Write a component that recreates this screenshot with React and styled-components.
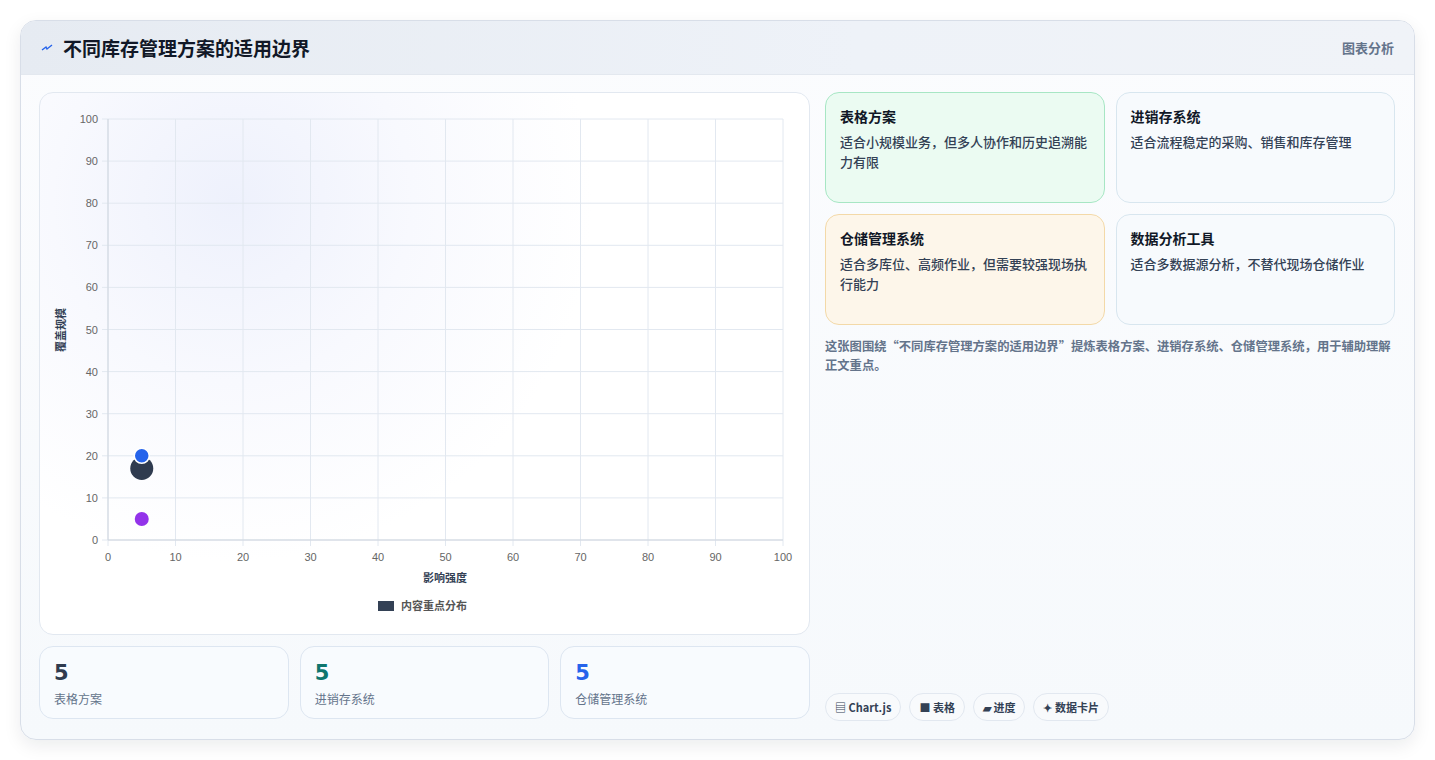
import React from 'react';
import styled, { createGlobalStyle } from 'styled-components';

const Global = createGlobalStyle`
  body { margin: 0; background: #fff; font-family: "Noto Sans CJK SC", "Noto Sans", sans-serif; }
`;

const Page = styled.div`
  padding: 20px;
  height: 760px;
  box-sizing: border-box;
`;

const Card = styled.div`
  width: 1395px;
  height: 720px;
  box-sizing: border-box;
  border: 1px solid #d8dee8;
  border-radius: 16px;
  overflow: hidden;
  background: linear-gradient(180deg, #fbfcfe, #f6f9fc);
  box-shadow: 0 6px 18px rgba(15, 23, 42, 0.08);
  display: flex;
  flex-direction: column;
`;

const Header = styled.div`
  height: 54px;
  flex-shrink: 0;
  box-sizing: border-box;
  display: flex;
  align-items: center;
  justify-content: space-between;
  padding: 0 20px;
  background: linear-gradient(90deg, #e6ebf2, #eef2f8 60%, #f0f3f8);
  border-bottom: 1px solid #e3e8ef;
`;

const Title = styled.h1`
  margin: 0;
  font-size: 19px;
  font-weight: 700;
  color: #111827;
  display: flex;
  align-items: center;
  gap: 10px;
`;

const HeaderTag = styled.span`
  font-size: 13px;
  color: #64748b;
  font-weight: 600;
`;

const Body = styled.div`
  flex: 1;
  display: grid;
  grid-template-columns: 771px 570px;
  gap: 15px;
  padding: 17px 18px 18px 18px;
`;

const LeftCol = styled.div`
  display: flex;
  flex-direction: column;
  gap: 11px;
`;

const ChartPanel = styled.div`
  height: 543px;
  box-sizing: border-box;
  border: 1px solid #e2e8f0;
  border-radius: 14px;
  background: radial-gradient(circle at 25% 20%, #eef1fc 0, #f8f9fe 25%, #ffffff 50%);
`;

const Stats = styled.div`
  display: grid;
  grid-template-columns: repeat(3, 1fr);
  gap: 11px;
`;

const Stat = styled.div`
  height: 73px;
  box-sizing: border-box;
  border: 1px solid #dde6f1;
  border-radius: 14px;
  background: #f8fbfe;
  padding: 12px 14px;
`;

const StatNum = styled.div`
  font-family: "DejaVu Sans", sans-serif;
  font-weight: 800;
  font-size: 21px;
  line-height: 28px;
  color: ${p => p.color};
`;

const StatLabel = styled.div`
  font-size: 12px;
  color: #64748b;
  margin-top: 3px;
`;

const RightCol = styled.div`
  display: flex;
  flex-direction: column;
`;

const Grid = styled.div`
  display: grid;
  grid-template-columns: 1fr 1fr;
  gap: 11px;
`;

const Info = styled.div`
  height: 111px;
  box-sizing: border-box;
  border: 1px solid ${p => p.border};
  background: ${p => p.bg};
  border-radius: 14px;
  padding: 13px 14px;
`;

const InfoTitle = styled.div`
  font-size: 14px;
  font-weight: 700;
  color: #111827;
  margin-bottom: 6px;
`;

const InfoText = styled.div`
  font-size: 13px;
  line-height: 20px;
  color: #334155;
  font-weight: 500;
`;

const Note = styled.p`
  margin: 12px 0 0;
  font-size: 12.3px;
  line-height: 19px;
  color: #64748b;
  font-weight: 600;
`;

const Chips = styled.div`
  margin-top: auto;
  display: flex;
  gap: 8px;
`;

const Chip = styled.span`
  height: 28px;
  box-sizing: border-box;
  border: 1px solid #e2e8f0;
  border-radius: 14px;
  background: #f8fafc;
  padding: 0 9px;
  display: flex;
  align-items: center;
  gap: 4px;
  font-size: 11px;
  font-weight: 700;
  color: #334155;
`;

const X0 = 68, X1 = 743, Y0 = 26, Y1 = 447;
const ticks = [0, 10, 20, 30, 40, 50, 60, 70, 80, 90, 100];
const px = v => X0 + (v / 100) * (X1 - X0);
const py = v => Y1 - (v / 100) * (Y1 - Y0);

const Chart = () => (
  <svg width="771" height="541" style={{ display: 'block' }} fontFamily="Liberation Sans, Noto Sans CJK SC, sans-serif">
    {ticks.map(t => (
      <g key={t}>
        <line x1={px(t)} x2={px(t)} y1={Y0} y2={Y1 + 6} stroke="#e2e8f0" />
        <line x1={X0 - 6} x2={X1} y1={py(t)} y2={py(t)} stroke="#e2e8f0" />
        <text x={X0 - 10} y={py(t) + 4} fontSize="11" fill="#666" textAnchor="end">{t}</text>
        <text x={px(t)} y={Y1 + 21} fontSize="11" fill="#666" textAnchor="middle">{t}</text>
      </g>
    ))}
    <line x1={X0} x2={X1} y1={Y1} y2={Y1} stroke="#cfd6df" />
    <line x1={X0} x2={X0} y1={Y0} y2={Y1} stroke="#cfd6df" />
    <text x={405} y={489} fontSize="11" fontWeight="700" fill="#334155" textAnchor="middle">影响强度</text>
    <text x={0} y={0} fontSize="11" fontWeight="700" fill="#334155" textAnchor="middle" transform="translate(25 237) rotate(-90)">覆盖规模</text>
    <circle cx={px(5)} cy={py(17)} r="11.5" fill="#2f3b4f" />
    <circle cx={px(5)} cy={py(20)} r="7.5" fill="#2563eb" stroke="#fff" strokeWidth="1.5" />
    <circle cx={px(5)} cy={py(5)} r="7" fill="#9333ea" />
    <rect x={338} y={508} width={16} height={10} fill="#334155" />
    <text x={361} y={517} fontSize="11" fontWeight="600" fill="#555">内容重点分布</text>
  </svg>
);

const Bolt = () => (
  <svg width="12" height="12" viewBox="0 0 12 12">
    <path d="M1 8 L5 5 L6 7 L11 3" stroke="#2563eb" strokeWidth="1.4" fill="none" />
  </svg>
);

export default function App() {
  return (
    <Page>
      <Global />
      <Card>
        <Header>
          <Title><Bolt />不同库存管理方案的适用边界</Title>
          <HeaderTag>图表分析</HeaderTag>
        </Header>
        <Body>
          <LeftCol>
            <ChartPanel><Chart /></ChartPanel>
            <Stats>
              <Stat><StatNum color="#2f3b4f">5</StatNum><StatLabel>表格方案</StatLabel></Stat>
              <Stat><StatNum color="#0f766e">5</StatNum><StatLabel>进销存系统</StatLabel></Stat>
              <Stat><StatNum color="#2563eb">5</StatNum><StatLabel>仓储管理系统</StatLabel></Stat>
            </Stats>
          </LeftCol>
          <RightCol>
            <Grid>
              <Info border="#a7e6c4" bg="#ebfbf2">
                <InfoTitle>表格方案</InfoTitle>
                <InfoText>适合小规模业务，但多人协作和历史追溯能力有限</InfoText>
              </Info>
              <Info border="#d8e6ef" bg="#f7fafd">
                <InfoTitle>进销存系统</InfoTitle>
                <InfoText>适合流程稳定的采购、销售和库存管理</InfoText>
              </Info>
              <Info border="#f3d9a8" bg="#fdf6ea">
                <InfoTitle>仓储管理系统</InfoTitle>
                <InfoText>适合多库位、高频作业，但需要较强现场执行能力</InfoText>
              </Info>
              <Info border="#d8e6ef" bg="#f7fafd">
                <InfoTitle>数据分析工具</InfoTitle>
                <InfoText>适合多数据源分析，不替代现场仓储作业</InfoText>
              </Info>
            </Grid>
            <Note>这张图围绕“不同库存管理方案的适用边界”提炼表格方案、进销存系统、仓储管理系统，用于辅助理解正文重点。</Note>
            <Chips>
              <Chip>▤ Chart.js</Chip>
              <Chip>■ 表格</Chip>
              <Chip>▰ 进度</Chip>
              <Chip>✦ 数据卡片</Chip>
            </Chips>
          </RightCol>
        </Body>
      </Card>
    </Page>
  );
}
